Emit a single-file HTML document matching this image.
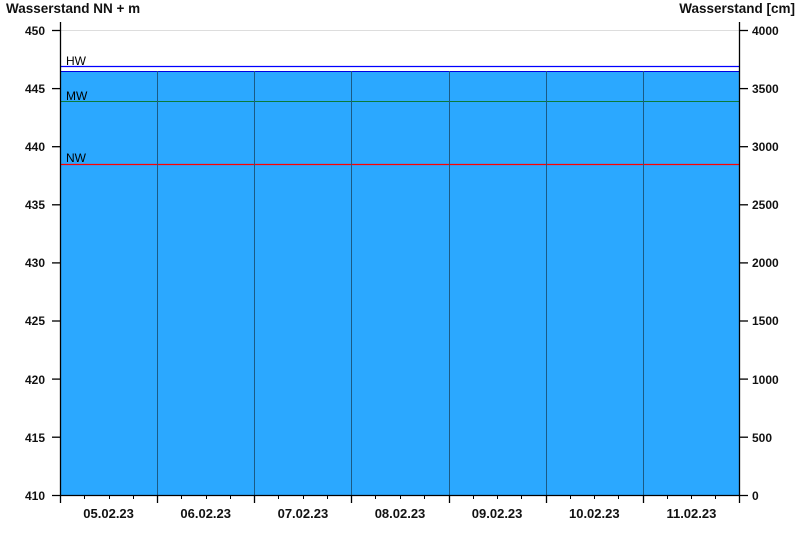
<!DOCTYPE html>
<html><head><meta charset="utf-8"><style>
html,body{margin:0;padding:0;background:#fff;width:800px;height:550px;overflow:hidden}
svg{display:block}
text{font-family:"Liberation Sans",Arial,sans-serif}
.b{font-weight:bold;font-size:12px;fill:#111}
.t{font-weight:bold;font-size:13.5px;fill:#111}
.d{font-weight:bold;font-size:13px;fill:#111}
.n{font-size:12px;fill:#000}
</style></head><body>
<svg width="800" height="550" viewBox="0 0 800 550">
<text class="t" x="6" y="13">Wasserstand NN + m</text>
<text class="t" x="795" y="13" text-anchor="end">Wasserstand [cm]</text>
<line x1="60" y1="30.5" x2="740" y2="30.5" stroke="#ddd"/>
<rect x="60" y="71" width="680" height="424" fill="#2ba8ff"/>
<line x1="60" y1="66.5" x2="740" y2="66.5" stroke="#0000ff" stroke-width="1.2"/>
<line x1="60" y1="71.5" x2="740" y2="71.5" stroke="#0000e0" stroke-width="1"/>
<line x1="60" y1="101.5" x2="740" y2="101.5" stroke="#0b7a3a" stroke-width="1"/>
<line x1="60" y1="164.5" x2="740" y2="164.5" stroke="#ff0000" stroke-width="1.2"/>
<g stroke="#1a5a85" stroke-width="1">
<line x1="157.5" y1="71" x2="157.5" y2="495"/>
<line x1="254.5" y1="71" x2="254.5" y2="495"/>
<line x1="351.5" y1="71" x2="351.5" y2="495"/>
<line x1="449.5" y1="71" x2="449.5" y2="495"/>
<line x1="546.5" y1="71" x2="546.5" y2="495"/>
<line x1="643.5" y1="71" x2="643.5" y2="495"/>
</g>
<text class="n" x="66" y="65">HW</text>
<text class="n" x="66" y="100">MW</text>
<text class="n" x="66" y="162">NW</text>
<g stroke="#000" stroke-width="1.3">
<line x1="60.5" y1="22" x2="60.5" y2="495"/>
<line x1="739.5" y1="22" x2="739.5" y2="495"/>
<line x1="52" y1="495.5" x2="748" y2="495.5"/>
<line x1="52" y1="30.5" x2="60" y2="30.5"/><line x1="740" y1="30.5" x2="748" y2="30.5"/>
<line x1="52" y1="88.6" x2="60" y2="88.6"/><line x1="740" y1="88.6" x2="748" y2="88.6"/>
<line x1="52" y1="146.7" x2="60" y2="146.7"/><line x1="740" y1="146.7" x2="748" y2="146.7"/>
<line x1="52" y1="204.8" x2="60" y2="204.8"/><line x1="740" y1="204.8" x2="748" y2="204.8"/>
<line x1="52" y1="262.9" x2="60" y2="262.9"/><line x1="740" y1="262.9" x2="748" y2="262.9"/>
<line x1="52" y1="321" x2="60" y2="321"/><line x1="740" y1="321" x2="748" y2="321"/>
<line x1="52" y1="379.1" x2="60" y2="379.1"/><line x1="740" y1="379.1" x2="748" y2="379.1"/>
<line x1="52" y1="437.2" x2="60" y2="437.2"/><line x1="740" y1="437.2" x2="748" y2="437.2"/>
<line x1="60.5" y1="495" x2="60.5" y2="503"/>
<line x1="157.5" y1="495" x2="157.5" y2="503"/>
<line x1="254.5" y1="495" x2="254.5" y2="503"/>
<line x1="351.5" y1="495" x2="351.5" y2="503"/>
<line x1="449.5" y1="495" x2="449.5" y2="503"/>
<line x1="546.5" y1="495" x2="546.5" y2="503"/>
<line x1="643.5" y1="495" x2="643.5" y2="503"/>
<line x1="739.5" y1="495" x2="739.5" y2="503"/>
</g>
<g stroke="#000" stroke-width="1">
<path d="M84.5 495v4M109.5 495v4M133.5 495v4M181.5 495v4M206.5 495v4M230.5 495v4M278.5 495v4M303.5 495v4M327.5 495v4M375.5 495v4M400.5 495v4M424.5 495v4M473.5 495v4M497.5 495v4M521.5 495v4M570.5 495v4M594.5 495v4M618.5 495v4M667.5 495v4M691.5 495v4M715.5 495v4"/>
</g>
<g>
<text class="b" x="45" y="35" text-anchor="end">450</text>
<text class="b" x="45" y="93" text-anchor="end">445</text>
<text class="b" x="45" y="151" text-anchor="end">440</text>
<text class="b" x="45" y="209" text-anchor="end">435</text>
<text class="b" x="45" y="267" text-anchor="end">430</text>
<text class="b" x="45" y="325" text-anchor="end">425</text>
<text class="b" x="45" y="384" text-anchor="end">420</text>
<text class="b" x="45" y="442" text-anchor="end">415</text>
<text class="b" x="45" y="500" text-anchor="end">410</text>
</g>
<g>
<text class="b" x="752" y="35">4000</text>
<text class="b" x="752" y="93">3500</text>
<text class="b" x="752" y="151">3000</text>
<text class="b" x="752" y="209">2500</text>
<text class="b" x="752" y="267">2000</text>
<text class="b" x="752" y="325">1500</text>
<text class="b" x="752" y="384">1000</text>
<text class="b" x="752" y="442">500</text>
<text class="b" x="752" y="500">0</text>
</g>
<g>
<text class="d" x="108.6" y="518" text-anchor="middle">05.02.23</text>
<text class="d" x="205.7" y="518" text-anchor="middle">06.02.23</text>
<text class="d" x="302.9" y="518" text-anchor="middle">07.02.23</text>
<text class="d" x="400" y="518" text-anchor="middle">08.02.23</text>
<text class="d" x="497.1" y="518" text-anchor="middle">09.02.23</text>
<text class="d" x="594.3" y="518" text-anchor="middle">10.02.23</text>
<text class="d" x="691.4" y="518" text-anchor="middle">11.02.23</text>
</g>
</svg>
</body></html>
